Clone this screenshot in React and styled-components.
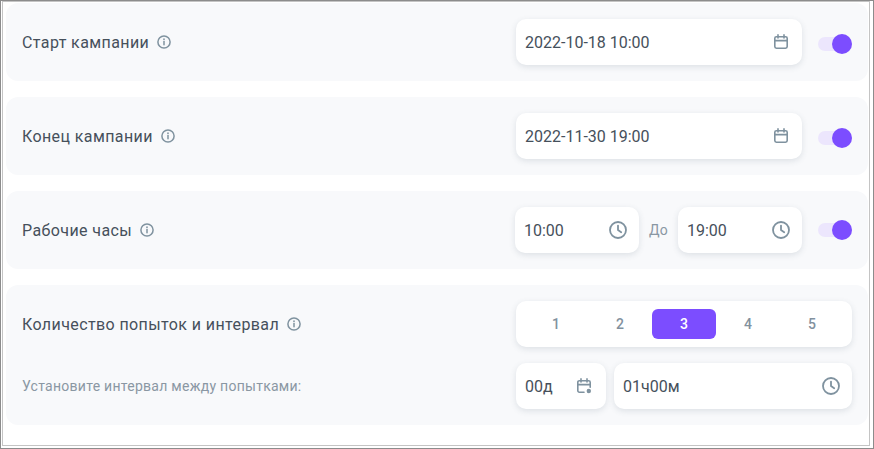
import React from "react";
import styled, { createGlobalStyle } from "styled-components";

const GlobalStyle = createGlobalStyle`
  html, body { margin: 0; padding: 0; background: #fff; }
  body { font-family: Roboto, "Liberation Sans", sans-serif; }
`;

const Frame = styled.div`
  box-sizing: border-box;
  width: 874px;
  height: 449px;
  border: 1px solid #8c8c8c;
  padding: 0 3px 2px 1px;
  background: #fff;
`;

const Inner = styled.div`
  box-sizing: border-box;
  height: 100%;
  border: 1px solid #c4c4c4;
  padding: 1px 1px 0 3px;
  display: flex;
  flex-direction: column;
  gap: 16px;
`;

const Card = styled.section`
  background: #f8f9fb;
  border-radius: 12px;
  padding: 16px;
  display: flex;
  flex-direction: column;
  gap: 16px;
`;

const Row = styled.div`
  display: flex;
  align-items: center;
  justify-content: space-between;
  height: 46px;
`;

const Label = styled.div`
  display: flex;
  align-items: center;
  gap: 8px;
  font-size: 16px;
  letter-spacing: 0.4px;
  color: #46505b;
`;

const Hint = styled.div`
  font-size: 14px;
  letter-spacing: 0.27px;
  color: #8a97a3;
`;

const Controls = styled.div`
  display: flex;
  align-items: center;
`;

const Field = styled.div`
  box-sizing: border-box;
  width: ${(p) => p.$w}px;
  height: 46px;
  padding: 0 ${(p) => p.$pr || 12}px 0 9px;
  background: #fff;
  border-radius: 10px;
  box-shadow: 0 2px 6px rgba(60, 80, 100, 0.14);
  display: flex;
  align-items: center;
  justify-content: space-between;
  font-size: 16px;
  color: #46505b;
`;

const To = styled.span`
  width: 39px;
  text-align: center;
  font-size: 14px;
  letter-spacing: 0.2px;
  color: #8a97a3;
`;

const Toggle = styled.div`
  position: relative;
  width: 34px;
  height: 14px;
  margin-left: 16px;
  margin-top: ${(p) => (p.$low ? 4 : 0)}px;
  border-radius: 7px;
  background: #ece6fd;
`;

const Knob = styled.span`
  position: absolute;
  right: 0;
  top: -3px;
  width: 20px;
  height: 20px;
  border-radius: 50%;
  background: #7c4dff;
`;

const Segments = styled.div`
  box-sizing: border-box;
  width: 336px;
  height: 46px;
  padding: 8px;
  background: #fff;
  border-radius: 10px;
  box-shadow: 0 2px 6px rgba(60, 80, 100, 0.14);
  display: grid;
  grid-template-columns: repeat(5, 64px);
`;

const Segment = styled.div`
  display: flex;
  align-items: center;
  justify-content: center;
  border-radius: 6px;
  font-size: 14px;
  font-weight: 500;
  color: ${(p) => (p.$active ? "#fff" : "#82919e")};
  background: ${(p) => (p.$active ? "#7c4dff" : "transparent")};
`;

const Gap = styled.div`
  width: 8px;
`;

const Icon = styled.svg`
  display: block;
  flex: none;
  fill: none;
  stroke: #7f929f;
  stroke-linecap: round;
  stroke-linejoin: round;
`;

const InfoIcon = () => (
  <Icon width="14" height="14" viewBox="0 0 14 14" strokeWidth="1.5">
    <circle cx="7" cy="7" r="6.1" />
    <path d="M7 6.6v3.2" strokeWidth="1.5" />
    <path d="M7 4.2v.1" strokeWidth="1.7" />
  </Icon>
);

const CalendarIcon = () => (
  <Icon width="16" height="16" viewBox="0 0 16 16" strokeWidth="1.6">
    <rect x="1.8" y="2.7" width="12.4" height="11.5" rx="1.6" />
    <path d="M1.8 6.6h12.4M5 .9v3M11 .9v3" />
  </Icon>
);

const CalendarDotIcon = () => (
  <Icon width="16" height="16" viewBox="0 0 16 16" strokeWidth="1.6">
    <path d="M8 14.2H3.4a1.6 1.6 0 0 1-1.6-1.6V4.3a1.6 1.6 0 0 1 1.6-1.6h9.2a1.6 1.6 0 0 1 1.6 1.6v5" />
    <path d="M1.8 6.6h12.4M5 .9v3M11 .9v3" />
    <circle cx="12.8" cy="13" r="2.2" fill="#7f929f" stroke="none" />
  </Icon>
);

const ClockIcon = () => (
  <Icon width="18" height="18" viewBox="0 0 18 18" strokeWidth="1.8">
    <circle cx="9" cy="9" r="8" />
    <path d="M9 4.6V9l3.2 2.2" />
  </Icon>
);

const Switch = ({ low }) => (
  <Toggle $low={low}>
    <Knob />
  </Toggle>
);

export default function App() {
  return (
    <Frame>
      <GlobalStyle />
      <Inner>
        <Card>
          <Row>
            <Label>
              Старт кампании <InfoIcon />
            </Label>
            <Controls>
              <Field $w={286} $pr={13}>
                2022-10-18 10:00
                <CalendarIcon />
              </Field>
              <Switch low />
            </Controls>
          </Row>
        </Card>
        <Card>
          <Row>
            <Label>
              Конец кампании <InfoIcon />
            </Label>
            <Controls>
              <Field $w={286} $pr={13}>
                2022-11-30 19:00
                <CalendarIcon />
              </Field>
              <Switch low />
            </Controls>
          </Row>
        </Card>
        <Card>
          <Row>
            <Label>
              Рабочие часы <InfoIcon />
            </Label>
            <Controls>
              <Field $w={124}>
                10:00
                <ClockIcon />
              </Field>
              <To>До</To>
              <Field $w={124}>
                19:00
                <ClockIcon />
              </Field>
              <Switch />
            </Controls>
          </Row>
        </Card>
        <Card>
          <Row>
            <Label>
              Количество попыток и интервал <InfoIcon />
            </Label>
            <Segments>
              {[1, 2, 3, 4, 5].map((n) => (
                <Segment key={n} $active={n === 3}>
                  {n}
                </Segment>
              ))}
            </Segments>
          </Row>
          <Row>
            <Hint>Установите интервал между попытками:</Hint>
            <Controls>
              <Field $w={90} $pr={14}>
                00д
                <CalendarDotIcon />
              </Field>
              <Gap />
              <Field $w={238}>
                01ч00м
                <ClockIcon />
              </Field>
            </Controls>
          </Row>
        </Card>
      </Inner>
    </Frame>
  );
}
